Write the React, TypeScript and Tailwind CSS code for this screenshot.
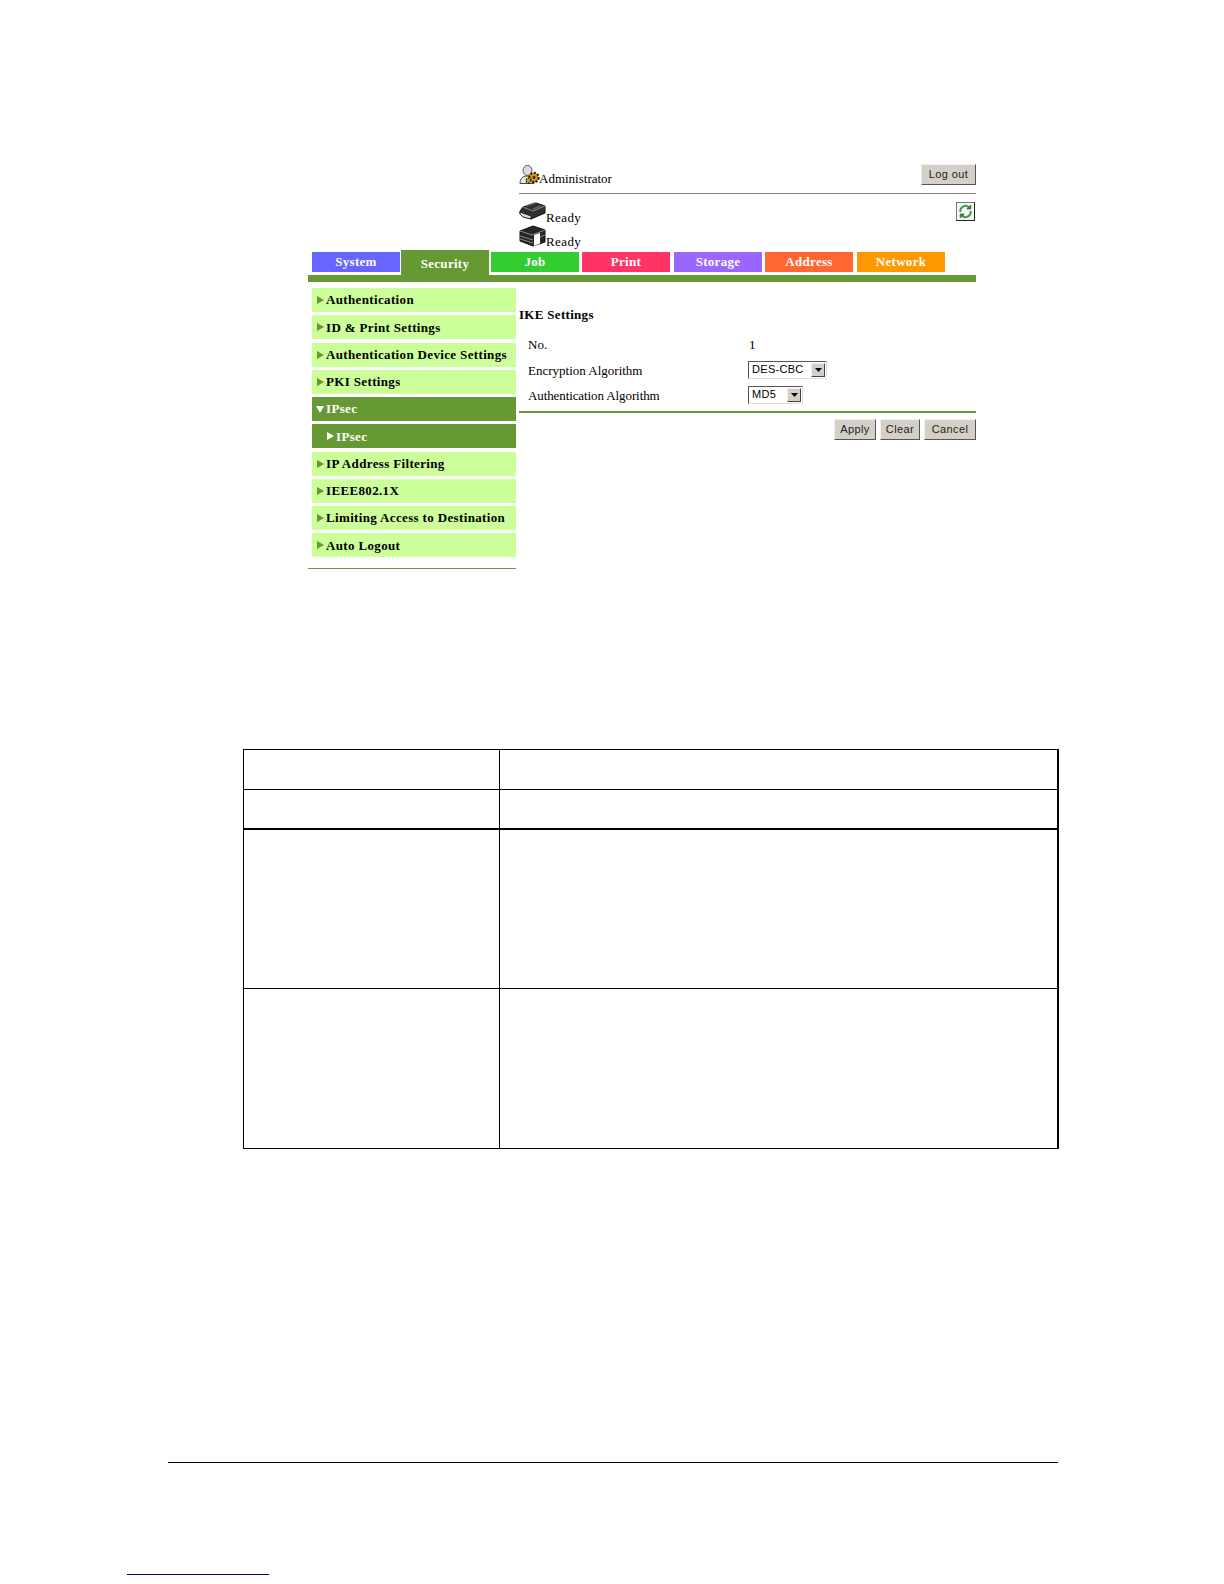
const tabs = [
  { label: 'System', className: 'ml-[4px] mt-[2px] h-[20px] w-[88px] bg-[#6666ff]' },
  { label: 'Security', className: 'ml-[1px] h-[25px] w-[88px] bg-[#669933] pt-[3px]' },
  { label: 'Job', className: 'ml-[2px] mt-[2px] h-[20px] w-[88px] bg-[#33cc33]' },
  { label: 'Print', className: 'ml-[3px] mt-[2px] h-[20px] w-[88px] bg-[#ff3366]' },
  { label: 'Storage', className: 'ml-[4px] mt-[2px] h-[20px] w-[88px] bg-[#9966ff]' },
  { label: 'Address', className: 'ml-[3px] mt-[2px] h-[20px] w-[88px] bg-[#ff6633]' },
  { label: 'Network', className: 'ml-[4px] mt-[2px] h-[20px] w-[88px] bg-[#ff9900]' },
];

const menu = [
  { label: 'Authentication' },
  { label: 'ID & Print Settings' },
  { label: 'Authentication Device Settings' },
  { label: 'PKI Settings' },
  { label: 'IPsec', open: true },
  { label: 'IPsec', sub: true },
  { label: 'IP Address Filtering' },
  { label: 'IEEE802.1X' },
  { label: 'Limiting Access to Destination' },
  { label: 'Auto Logout' },
];

function AdminIcon() {
  return (
    <svg width="22" height="20" viewBox="0 0 22 20">
      <ellipse cx="8.5" cy="5.5" rx="4.5" ry="5" fill="#dcdcdc" stroke="#555" />
      <path d="M1 18.5c0-5 3-7.5 7-7.5s6 2 7 4v3.5z" fill="#e8e8e8" stroke="#444" />
      <circle cx="15" cy="12.5" r="4.5" fill="#c88a12" stroke="#2c1e00" strokeWidth="2.4" strokeDasharray="2 1.4" />
      <circle cx="15" cy="12.5" r="3.4" fill="#d89a1c" />
      <circle cx="15" cy="12.5" r="1.4" fill="#2c1e00" />
      <circle cx="9.5" cy="15.5" r="2.4" fill="#d89a1c" stroke="#2c1e00" strokeWidth="1.4" strokeDasharray="1.4 1" />
    </svg>
  );
}

function PrinterIcon() {
  return (
    <svg width="27" height="19" viewBox="0 0 27 19">
      <path d="M4 5 17 1l9 3v7L12 17 1 12V9z" fill="#2f2f2f" stroke="#111" />
      <path d="M4 5l10 4 12-5" fill="none" stroke="#8a8a8a" />
      <path d="M7 4l9-3M14 7l8-3" stroke="#666" strokeWidth="1.5" />
      <path d="M1 10l11 4v3L4 15 1 12z" fill="#cfe6dc" stroke="#222" />
    </svg>
  );
}

function FinisherIcon() {
  return (
    <svg width="27" height="22" viewBox="0 0 27 22">
      <path d="M1 6 14 1l12 4v12l-12 4-13-5z" fill="#262626" stroke="#111" />
      <path d="M1 6l12 4 13-5" fill="none" stroke="#8a8a8a" />
      <path d="M15 10v11l6-2.5V8z" fill="#fff" />
      <path d="M1 11l13 4M1 14l13 4M21 12l5-2" stroke="#8a8a8a" />
    </svg>
  );
}

function RefreshButton() {
  return (
    <div className="mr-px mt-[8px] flex h-[19px] w-[19px] items-center justify-center border border-t-[#777] border-l-[#777] border-r-[#222] border-b-[#222] bg-[#f6f6f2]">
      <svg width="15" height="15" viewBox="0 0 15 15" fill="none" stroke="#3f9a50" strokeWidth="2">
        <path d="M2.5 8a5 5 0 0 1 8.5-4.5" />
        <path d="M12.5 7a5 5 0 0 1-8.5 4.5" />
        <path d="M12.8 1v4h-4z" fill="#3f9a50" stroke="#123" strokeWidth="0.5" />
        <path d="M2.2 14v-4h4z" fill="#3f9a50" stroke="#123" strokeWidth="0.5" />
      </svg>
    </div>
  );
}

function Arrow({ down, className }: { down?: boolean; className: string }) {
  return (
    <svg width="8" height="8" viewBox="0 0 8 8" className={className}>
      <path d={down ? 'M0 1h8L4 8z' : 'M1 0l7 4-7 4z'} />
    </svg>
  );
}

function FakeSelect({ value, width }: { value: string; width: string }) {
  return (
    <div className={`-mt-[2px] flex h-[18px] items-center justify-between border border-t-[#555] border-l-[#555] border-r-[#ddd] border-b-[#ddd] bg-white pl-[3px] pr-[1px] font-['Liberation_Sans',sans-serif] text-[11px] tracking-[0.3px] ${width}`}>
      <span>{value}</span>
      <span className="flex h-[14px] w-[14px] items-center justify-center border border-t-[#eee] border-l-[#eee] border-r-[#444] border-b-[#444] bg-[#d4d0c8]">
        <svg width="7" height="4" viewBox="0 0 7 4"><path d="M0 0h7L3.5 4z" fill="#000" /></svg>
      </span>
    </div>
  );
}

function GreyButton({ label, className }: { label: string; className: string }) {
  return (
    <div className={`flex items-center justify-center border border-t-[#eee] border-l-[#eee] border-r-[#555] border-b-[#555] bg-[#d4d0c8] font-['Liberation_Sans',sans-serif] text-[11px] tracking-[0.4px] text-[#222] ${className}`}>
      {label}
    </div>
  );
}

export default function App() {
  return (
    <div className="h-[1584px] w-[1224px] bg-white pt-[164px] font-['Liberation_Serif',serif] text-[13px] text-black">
      <div className="ml-[308px] w-[668px]">
        <div className="ml-[211px]">
          <div className="flex h-[30px] justify-between border-b border-[#808080]">
            <div className="flex items-end pb-[8px]">
              <AdminIcon />
              <span className="-mb-[3px] ml-[-2px]">Administrator</span>
            </div>
            <GreyButton label="Log out" className="h-[21px] w-[55px]" />
          </div>
          <div className="flex h-[56px] justify-between">
            <div className="flex flex-col pt-[5px]">
              <div className="flex h-[22px] items-end">
                <PrinterIcon />
                <span className="-mb-[6px] tracking-[0.4px]">Ready</span>
              </div>
              <div className="flex h-[26px] items-end">
                <FinisherIcon />
                <span className="-mb-[4px] tracking-[0.4px]">Ready</span>
              </div>
            </div>
            <RefreshButton />
          </div>
        </div>

        <div className="flex h-[25px] items-start">
          {tabs.map((tab) => (
            <div key={tab.label} className={`flex items-center justify-center text-[13px] font-bold tracking-[0.3px] text-white ${tab.className}`}>
              {tab.label}
            </div>
          ))}
        </div>
        <div className="h-[7px] bg-[#669933]" />

        <div className="flex">
          <div className="w-[208px]">
            <div className="ml-[4px] mt-[6px] flex flex-col gap-[3.25px]">
              {menu.map((item, i) => (
                <div
                  key={i}
                  className={`flex h-[24px] items-center text-[13px] font-bold tracking-[0.35px] ${item.open || item.sub ? 'bg-[#669933] text-white' : 'bg-[#ccff99] text-black'} ${item.sub ? 'pl-[14px]' : 'pl-[4px]'}`}
                >
                  <Arrow
                    down={item.open}
                    className={`mr-[2px] shrink-0 ${item.open || item.sub ? 'fill-white' : 'fill-[#669933]'}`}
                  />
                  {item.label}
                </div>
              ))}
            </div>
            <div className="mt-[11px] h-px bg-[#669933]" />
          </div>

          <div className="ml-[3px] flex-1">
            <h2 className="mt-[25px] h-[25px] text-[13px] font-bold leading-[16px] tracking-[0.3px]">IKE Settings</h2>
            <div className="ml-[9px] flex flex-col">
              <div className="flex h-[26px] items-center">
                <span className="w-[220px]">No.</span>
                <span className="ml-px">1</span>
              </div>
              <div className="flex h-[25px] items-center">
                <span className="w-[220px]">Encryption Algorithm</span>
                <FakeSelect value="DES-CBC" width="w-[79px]" />
              </div>
              <div className="flex h-[25px] items-center">
                <span className="w-[220px] tracking-[-0.1px]">Authentication Algorithm</span>
                <FakeSelect value="MD5" width="w-[55px]" />
              </div>
            </div>
            <div className="mt-[3px] h-[2px] bg-[#669933]" />
            <div className="mt-[6px] flex justify-end gap-[4px]">
              <GreyButton label="Apply" className="h-[21px] w-[42px]" />
              <GreyButton label="Clear" className="h-[21px] w-[40px]" />
              <GreyButton label="Cancel" className="h-[21px] w-[52px]" />
            </div>
          </div>
        </div>
      </div>

      <table className="ml-[243px] mt-[179.75px] w-[816px] table-fixed border-collapse border border-r-2 border-black">
        <colgroup>
          <col className="w-[256px]" />
          <col />
        </colgroup>
        <tbody>
          <tr className="h-[40px]"><td className="border border-black" /><td className="border border-r-2 border-black" /></tr>
          <tr className="h-[39px]"><td className="border border-b-2 border-black" /><td className="border border-r-2 border-b-2 border-black" /></tr>
          <tr className="h-[160px]"><td className="border border-black" /><td className="border border-r-2 border-black" /></tr>
          <tr className="h-[160px]"><td className="border border-black" /><td className="border border-r-2 border-black" /></tr>
        </tbody>
      </table>

      <div className="ml-[168px] mt-[313px] h-px w-[890px] bg-black" />
      <div className="ml-[127px] mt-[111px] h-px w-[142px] bg-[#000080]" />
    </div>
  );
}
